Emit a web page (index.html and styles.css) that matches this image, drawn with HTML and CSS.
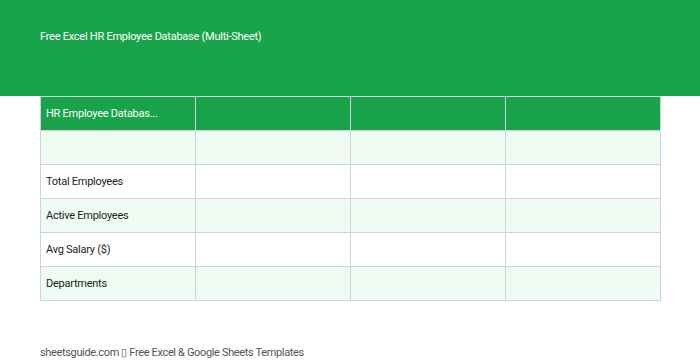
FILE: index.html
```html
<!DOCTYPE html>
<html>
<head>
<meta charset="utf-8">
<link rel="stylesheet" href="styles.css">
</head>
<body>
<header class="banner">
  <h1 class="title">Free Excel HR Employee Database (Multi-Sheet)</h1>
</header>
<main class="content">
  <table class="sheet">
    <tr class="head-row"><td>HR Employee Databas...</td><td></td><td></td><td></td></tr>
    <tr class="alt"><td></td><td></td><td></td><td></td></tr>
    <tr><td>Total Employees</td><td></td><td></td><td></td></tr>
    <tr class="alt"><td>Active Employees</td><td></td><td></td><td></td></tr>
    <tr><td>Avg Salary ($)</td><td></td><td></td><td></td></tr>
    <tr class="alt"><td>Departments</td><td></td><td></td><td></td></tr>
  </table>
</main>
<footer class="footer">sheetsguide.com ▯ Free Excel &amp; Google Sheets Templates</footer>
</body>
</html>
```
FILE: styles.css
```css
html, body {
  margin: 0;
  padding: 0;
  background: #ffffff;
  font-family: Roboto, "Liberation Sans", sans-serif;
}
.banner {
  background: #19a34b;
  height: 96px;
  padding: 0 40px;
  box-sizing: border-box;
}
.title {
  margin: 0;
  padding-top: 30px;
  font-size: 11px;
  font-weight: 400;
  line-height: 14px;
  color: #ffffff;
  letter-spacing: -0.25px;
}
.content {
  padding: 0 40px;
}
.sheet {
  border-collapse: collapse;
  table-layout: fixed;
  width: 621px;
}
.sheet td {
  width: 155px;
  height: 34px;
  box-sizing: border-box;
  border: 1px solid #d2d3da;
  padding: 0 5px;
  font-size: 11px;
  color: #222222;
  letter-spacing: -0.25px;
  white-space: nowrap;
  overflow: hidden;
}
.sheet .head-row td {
  background: #19a34b;
  color: #ffffff;
}
.sheet .alt td {
  background: #effcf3;
}
.footer {
  padding: 45px 40px 0;
  font-size: 11px;
  color: #555555;
  letter-spacing: -0.35px;
  line-height: 14px;
}
```
